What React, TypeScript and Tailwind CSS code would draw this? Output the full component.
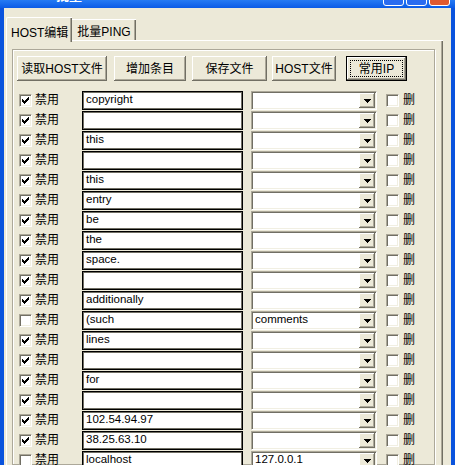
import React from 'react';

const rows = [
  { on: true, host: 'copyright', ip: '' },
  { on: true, host: '', ip: '' },
  { on: true, host: 'this', ip: '' },
  { on: true, host: '', ip: '' },
  { on: true, host: 'this', ip: '' },
  { on: true, host: 'entry', ip: '' },
  { on: true, host: 'be', ip: '' },
  { on: true, host: 'the', ip: '' },
  { on: true, host: 'space.', ip: '' },
  { on: true, host: '', ip: '' },
  { on: true, host: 'additionally', ip: '' },
  { on: false, host: '(such', ip: 'comments' },
  { on: true, host: 'lines', ip: '' },
  { on: true, host: '', ip: '' },
  { on: true, host: 'for', ip: '' },
  { on: true, host: '', ip: '' },
  { on: true, host: '102.54.94.97', ip: '' },
  { on: true, host: '38.25.63.10', ip: '' },
  { on: false, host: 'localhost', ip: '127.0.0.1' },
];

const font = "font-['Liberation_Sans','Noto_Sans_CJK_SC',sans-serif]";

function Check({ on }: { on: boolean }) {
  return (
    <span className="w-[13px] h-[13px] shrink-0 bg-white border border-[#aca899] border-r-white border-b-white shadow-[inset_1px_1px_0_#716f64,inset_-1px_-1px_0_#f1efe2] flex items-center justify-center">
      {on && (
        <svg width="7" height="7" viewBox="0 0 7 7" shapeRendering="crispEdges">
          <path d="M6 0h1v1H6zM5 1h2v1H5zM0 2h1v1H0zM4 2h3v1H4zM0 3h2v1H0zM3 3h3v1H3zM0 4h5v1H0zM1 5h3v1H1zM2 6h1v1H2z" fill="#000" />
        </svg>
      )}
    </span>
  );
}

function Btn({ label, w, focus }: { label: string; w: string; focus?: boolean }) {
  if (focus) {
    return (
      <div className={`${w} h-[25px] shrink-0 border border-black bg-[#ece9d8] shadow-[inset_-1px_-1px_0_#716f64,inset_1px_1px_0_#fff,inset_-2px_-2px_0_#aca899] p-[3px]`}>
        <div className="w-full h-full border border-dotted border-black flex items-center justify-center text-[12px] text-black">{label}</div>
      </div>
    );
  }
  return (
    <div className={`${w} h-[25px] shrink-0 bg-[#ece9d8] shadow-[inset_-1px_-1px_0_#716f64,inset_1px_1px_0_#fff,inset_-2px_-2px_0_#aca899] flex items-center justify-center text-[12px] text-black`}>
      {label}
    </div>
  );
}

function Row({ on, host, ip }: { on: boolean; host: string; ip: string }) {
  return (
    <div className="h-[20px] flex items-center shrink-0">
      <div className="ml-[6px]">
        <Check on={on} />
      </div>
      <span className="w-[50px] pl-[3px] text-[12px] leading-none text-black">禁用</span>
      <div className="w-[161px] h-[19px] shrink-0 bg-white border border-black shadow-[inset_1px_1px_0_#716f64,inset_-1px_-1px_0_#716f64] flex items-center pl-[3px] text-[11.5px] text-black">
        {host}
      </div>
      <div className="ml-[8px] w-[126px] h-[19px] shrink-0 bg-white border border-[#aca899] border-r-white border-b-white shadow-[inset_1px_1px_0_#716f64,inset_-1px_-1px_0_#f1efe2] flex items-center p-[1px]">
        <span className="flex-1 pl-[2px] text-[11.5px] text-black">{ip}</span>
        <div className="w-[16px] h-full bg-[#ece9d8] shadow-[inset_-1px_-1px_0_#716f64,inset_1px_1px_0_#fff,inset_-2px_-2px_0_#aca899] flex items-center justify-center">
          <svg width="7" height="4" viewBox="0 0 7 4" shapeRendering="crispEdges" className="mt-[2px]">
            <path d="M0 0h7v1H0zM1 1h5v1H1zM2 2h3v1H2zM3 3h1v1H3z" fill="#000" />
          </svg>
        </div>
      </div>
      <div className="ml-[9px]">
        <Check on={false} />
      </div>
      <span className="ml-[4px] text-[12px] leading-none text-black">删</span>
    </div>
  );
}

export default function App() {
  return (
    <div className={`w-[455px] h-[465px] overflow-hidden flex flex-col bg-[#0a53dd] ${font}`}>
      {/* title bar, mostly scrolled off the top */}
      <div className="h-[8px] shrink-0 flex items-end overflow-hidden">
        <div className="h-[30px] w-full shrink-0 bg-gradient-to-b from-[#0058ee] via-[#3d95ff] to-[#0a5ae6] flex items-end justify-between">
          <span className="ml-[20px] mb-[6px] text-[13px] leading-[13px] font-bold text-white">HOST批量</span>
          <div className="flex gap-[2px] mr-[5px] mb-[2px]">
            <div className="w-[21px] h-[21px] rounded-[3px] border border-white bg-[#2a6cf0]" />
            <div className="w-[21px] h-[21px] rounded-[3px] border border-white bg-[#2a6cf0]" />
            <div className="w-[21px] h-[21px] rounded-[3px] border border-white bg-[#e0592f]" />
          </div>
        </div>
      </div>

      {/* client */}
      <div className="flex-1 mx-[4px] bg-[#ece9d8] flex flex-col pt-[7px] min-h-0">
        <div className="flex items-end pl-[2px] h-[25px] shrink-0">
          <div className="relative z-10 h-[25px] -mb-[2px] px-[4px] bg-[#ece9d8] border-l border-t border-white rounded-tl-[2px] shadow-[inset_-1px_0_0_#716f64,inset_-2px_0_0_#aca899] flex items-start pt-[6px] text-[12px] text-black">
            HOST编辑
          </div>
          <div className="h-[21px] px-[5px] border-t border-white shadow-[inset_-1px_0_0_#716f64,inset_-2px_0_0_#aca899] flex items-start pt-[3px] text-[12px] text-black">
            批量PING
          </div>
        </div>

        <div className="flex-1 ml-[2px] mr-[8px] border-l border-t border-white shadow-[inset_-1px_0_0_#716f64,inset_-2px_0_0_#aca899] pt-[8px] pl-[5px] pr-[8px] flex flex-col min-h-0">
          <div className="flex-1 border border-[#aca899] shadow-[inset_1px_1px_0_#fff,1px_1px_0_#fff] flex flex-col min-h-0">
            <div className="flex pt-[6px] pl-[4px] shrink-0">
              <Btn label="读取HOST文件" w="w-[90px]" />
              <div className="ml-[7px]"><Btn label="增加条目" w="w-[72px]" /></div>
              <div className="ml-[6px]"><Btn label="保存文件" w="w-[75px]" /></div>
              <div className="ml-[5px]"><Btn label="HOST文件" w="w-[64px]" /></div>
              <div className="ml-[10px]"><Btn label="常用IP" w="w-[61px]" focus /></div>
            </div>
            <div className="flex flex-col pt-[9px]">
              {rows.map((r, i) => (
                <Row key={i} {...r} />
              ))}
            </div>
          </div>
        </div>
      </div>
    </div>
  );
}
